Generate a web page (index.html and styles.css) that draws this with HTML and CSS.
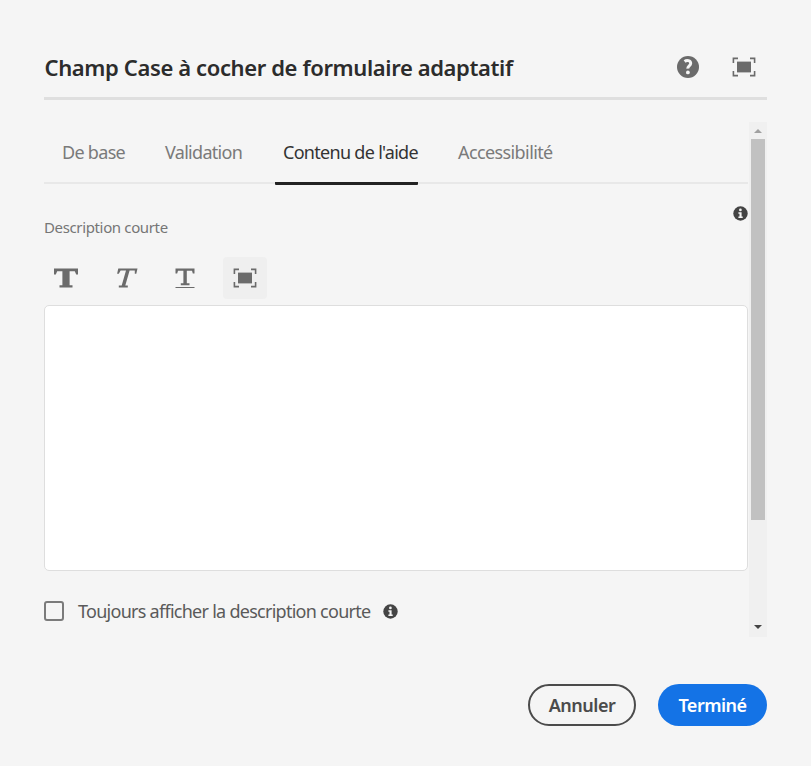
FILE: index.html
```html
<!DOCTYPE html>
<html lang="fr">
<head>
<meta charset="utf-8">
<title>Champ Case à cocher de formulaire adaptatif</title>
<link rel="stylesheet" href="styles.css">
</head>
<body>
<svg class="defs" aria-hidden="true">
  <symbol id="fullscreen" viewBox="0 0 24 20">
    <path d="M1.4 6V1.4H6M18 1.4h4.6V6M22.6 14v4.6H18M6 18.6H1.4V14" fill="none" stroke="currentColor" stroke-width="1.6"/>
    <rect x="5" y="4.6" width="14" height="10.8" fill="currentColor"/>
  </symbol>
  <symbol id="info" viewBox="0 0 15 15">
    <circle cx="7.5" cy="7.5" r="7.2" fill="currentColor"/>
    <circle cx="7.4" cy="3.9" r="1.35" fill="#f5f5f5"/>
    <path d="M5.4 6.2h3.2v4.4h1.1v1.5H5.4v-1.5h1.1V7.7H5.4z" fill="#f5f5f5"/>
  </symbol>
</svg>
<main class="dialog">
  <header class="header">
    <h1 class="title">Champ Case à cocher de formulaire adaptatif</h1>
    <div class="header-actions">
      <svg class="help" viewBox="0 0 22 22">
        <circle cx="11" cy="11" r="11" fill="currentColor"/>
        <path d="M7.6 5.5C9.8 3.7 13.7 4.4 13.7 7.3c0 2.7-3.1 2.6-2.9 5.3" fill="none" stroke="#f5f5f5" stroke-width="3"/>
        <circle cx="10.9" cy="16.4" r="1.9" fill="#f5f5f5"/>
      </svg>
      <svg class="expand"><use href="#fullscreen"/></svg>
    </div>
  </header>
  <section class="scroller">
    <div class="content">
      <nav class="tabs">
        <span class="tab t1">De base</span>
        <span class="tab t2">Validation</span>
        <span class="tab t3 active">Contenu de l'aide</span>
        <span class="tab t4">Accessibilité</span>
      </nav>
      <div class="field-head">
        <label class="label">Description courte</label>
        <svg class="info"><use href="#info"/></svg>
      </div>
      <div class="toolbar">
        <button class="tool"><svg viewBox="0 0 24 20" class="glyph"><path d="M0 .5h24v6h-1.8L20.8 3.3h-5.2v14h2.9v2.2H5.5v-2.2h2.9v-14H3.2L1.8 6.5H0z" fill="currentColor"/></svg></button>
        <button class="tool"><svg viewBox="0 0 24 20" class="glyph"><path d="M4.3.5H23.5l-1.2 5.3h-1.5V2.6h-5.2l-4.3 15h2.5v1.9H4.8v-1.9h2.9L12 2.6H6.6L4.8 5.8H3.1z" fill="currentColor"/></svg></button>
        <button class="tool"><svg viewBox="0 0 24 20" class="glyph"><path d="M2.5.5h19v5h-1.7L19 2.8h-5.2v12.4h2.7v2H7.8v-2h2.6V2.8H5l-.8 2.7H2.5zM2.5 19h19v1.2h-19z" fill="currentColor"/></svg></button>
        <button class="tool selected"><svg class="glyph"><use href="#fullscreen"/></svg></button>
      </div>
      <div class="editor"></div>
      <div class="check-row">
        <span class="checkbox"></span>
        <span class="check-label">Toujours afficher la description courte</span>
        <svg class="info"><use href="#info"/></svg>
      </div>
    </div>
    <div class="scrollbar">
      <span class="arrow up"></span>
      <span class="thumb"></span>
      <span class="arrow down"></span>
    </div>
  </section>
  <footer class="footer">
    <button class="button cancel"><span>Annuler</span></button>
    <button class="button done"><span>Terminé</span></button>
  </footer>
</main>
</body>
</html>
```
FILE: styles.css
```css
* { box-sizing: border-box; }
body { margin: 0; background: #f5f5f5; font-family: "Noto Sans", "Open Sans", sans-serif; }
svg { display: block; flex: none; }
.defs { display: none; }
button { border: 0; margin: 0; padding: 0; background: none; font: inherit; }
.dialog { height: 766px; padding: 37px 44px 40px; display: flex; flex-direction: column; }
.header { height: 63px; border-bottom: 3px solid #dfdfdf; display: flex; justify-content: space-between; }
.title { margin: 0; font-size: 22px; line-height: 60px; font-weight: 600; color: #2c2c2c; white-space: nowrap; letter-spacing: -.38px; padding-left: .5px; }
.header-actions { display: flex; align-items: center; gap: 33px; padding-right: 11px; height: 60px; color: #6b6b6b; }
.help { width: 22px; height: 22px; }
.expand, .glyph { width: 24px; height: 20px; }
.scroller { display: flex; height: 515px; margin-top: 22px; }
.content { width: 705px; padding-right: 1px; }
.tabs { height: 62px; border-bottom: 2px solid #e8e8e8; display: flex; padding-left: 12px; font-size: 18px; color: #7a7a7a; }
.tab { height: 63px; line-height: 60px; padding-left: 7px; white-space: nowrap; flex: none; letter-spacing: -.7px; }
.t1 { width: 102px; padding-left: 6px; }
.t2 { width: 117px; }
.t3 { width: 143px; padding-left: 8px; margin-right: 32px; }
.t4 { padding-left: 8px; letter-spacing: -.6px; }
.active { color: #333; border-bottom: 3px solid #222; border-radius: 1px; }
.field-head { display: flex; justify-content: space-between; height: 73px; padding-top: 22px; }
.label { font-size: 15px; line-height: 20px; color: #767676; padding-top: 11px; letter-spacing: -.36px; }
.info { width: 15px; height: 15px; color: #444; }
.toolbar { display: flex; gap: 15.5px; height: 48px; }
.tool { width: 44px; height: 42px; display: flex; align-items: center; justify-content: center; color: #6b6b6b; border-radius: 4px; }
.selected { background: #efefef; }
.editor { height: 266px; background: #fff; border: 1px solid #dedede; border-radius: 5px; }
.check-row { display: flex; align-items: center; height: 44px; margin-top: 18px; }
.checkbox { width: 20px; height: 20px; border: 2px solid #7b7b7b; border-radius: 3px; }
.check-label { width: 306px; padding-left: 14px; font-size: 18px; color: #5a5a5a; white-space: nowrap; letter-spacing: -.73px; }
.check-row .info { margin-left: 13px; }
.scrollbar { width: 18px; background: #f0f0f0; display: flex; flex-direction: column; align-items: center; }
.arrow { border: 4px solid transparent; width: 0; height: 0; border-top-width: 0; border-bottom-width: 0; }
.up { border-bottom: 4px solid #a0a0a0; margin-top: 7px; }
.thumb { width: 14px; height: 381px; margin-top: 6px; background: #c1c1c1; }
.down { border-top: 4px solid #444; margin: auto 0 8px; }
.footer { display: flex; justify-content: flex-end; gap: 22px; margin-top: 47px; }
.button { height: 42px; border-radius: 21px; font-size: 18px; font-weight: 600; letter-spacing: -.5px; display: flex; align-items: center; justify-content: center; }
.cancel { width: 108px; border: 2px solid #4b4b4b; color: #4b4b4b; }
.done { width: 109px; background: #1473e6; color: #fff; }
```
